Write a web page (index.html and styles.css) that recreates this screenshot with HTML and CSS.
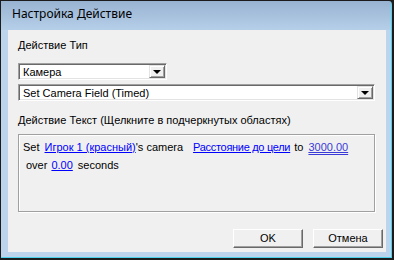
FILE: index.html
```html
<!DOCTYPE html>
<html lang="ru">
<head>
    <meta charset="UTF-8">
    <title>Настройка Действие</title>
    <link rel="stylesheet" href="styles.css">
</head>
<body>
    <div class="window">
        <div class="titlebar">Настройка Действие</div>
        <div class="client">
            <div class="label">Действие Тип</div>
            <div class="combo combo-short">
                <span class="combo-text">Камера</span>
                <span class="drop-btn"><i class="arrow"></i></span>
            </div>
            <div class="combo combo-long">
                <span class="combo-text">Set Camera Field (Timed)</span>
                <span class="drop-btn"><i class="arrow"></i></span>
            </div>
            <div class="label label-text">Действие Текст (Щелкните в подчеркнутых областях)</div>
            <div class="textbox">
                <div class="line">
                    <span>Set</span>
                    <a class="link link-player">Игрок 1 (красный)</a>
                    <span>'s camera</span>
                    <a class="link link-field">Расстояние до цели</a>
                    <span class="word-to">to</span>
                    <a class="link link-value">3000.00</a>
                </div>
                <div class="line line-indent">
                    <span>over</span>
                    <a class="link link-time">0.00</a>
                    <span class="word-seconds">seconds</span>
                </div>
            </div>
            <div class="buttons">
                <div class="button">OK</div>
                <div class="button">Отмена</div>
            </div>
        </div>
    </div>
</body>
</html>
```

FILE: styles.css
```css
body {
    margin: 0;
    font-family: 'Liberation Sans', Arial, sans-serif;
    font-size: 11px;
    color: #000;
    background: #1c1c1c;
}
.window {
    width: 394px;
    height: 260px;
    box-sizing: border-box;
    border: 1px solid #1c1c1c;
    border-right-width: 2px;
    border-bottom-width: 2px;
    border-top-right-radius: 5px;
    background: linear-gradient(#98b3d1 0, #b6cfe9 29px, #bcd4ec 29px);
    box-shadow: inset -1px -1px 0 #4cd2ea;
    display: flex;
    flex-direction: column;
}
.titlebar {
    height: 29px;
    box-sizing: border-box;
    padding: 5px 0 0 11px;
    font-family: 'Noto Sans', sans-serif;
    font-size: 12px;
    line-height: 16px;
}
.client {
    flex: 1;
    margin: 0 6px 6px 7px;
    background: #f0f0f0;
    padding: 8px 0 0 10px;
    display: flex;
    flex-direction: column;
    align-items: flex-start;
}
.label {
    line-height: 14px;
    height: 14px;
}
.combo {
    box-sizing: border-box;
    height: 17px;
    background: #fff;
    border-top: 1px solid #a0a0a0;
    border-left: 1px solid #a0a0a0;
    border-bottom: 1px solid #fff;
    border-right: 1px solid #fff;
    box-shadow: inset 1px 1px 0 #696969, inset -1px -1px 0 #e3e3e3;
    display: flex;
    align-items: stretch;
    padding: 2px 1px 1px 2px;
}
.combo-short {
    width: 149px;
    margin-top: 11px;
}
.combo-long {
    width: 357px;
    margin-top: 4px;
}
.combo-text {
    flex: 1;
    padding-left: 2px;
    line-height: 13px;
}
.drop-btn {
    width: 16px;
    box-sizing: border-box;
    background: #f0f0f0;
    border-top: 1px solid #e3e3e3;
    border-left: 1px solid #e3e3e3;
    border-right: 1px solid #696969;
    border-bottom: 1px solid #696969;
    box-shadow: inset 1px 1px 0 #fff, inset -1px -1px 0 #a0a0a0;
    display: flex;
    align-items: center;
    justify-content: center;
    margin-top: -1px;
}
.arrow {
    width: 0;
    height: 0;
    border-left: 4px solid transparent;
    border-right: 4px solid transparent;
    border-top: 4px solid #000;
    margin-top: 1px;
}
.label-text {
    margin-top: 12px;
}
.textbox {
    width: 357px;
    height: 78px;
    box-sizing: border-box;
    margin-top: 7px;
    border: 1px solid #a0a0a0;
    box-shadow: inset 1px 1px 0 #fff, 1px 1px 0 #fff;
    padding: 4px 0 0 4px;
}
.line {
    display: flex;
    line-height: 17px;
    height: 18px;
    white-space: pre;
}
.line-indent {
    padding-left: 3px;
}
.link {
    color: #0000ff;
    text-decoration: underline;
}
.link-player {
    margin-left: 5px;
}
.link-field {
    margin-left: 10px;
    letter-spacing: -0.3px;
}
.word-to {
    margin-left: 4px;
}
.link-value {
    margin-left: 5px;
    color: #3a3ad8;
    text-decoration: underline double;
}
.link-time {
    margin-left: 4px;
}
.word-seconds {
    margin-left: 5px;
}
.buttons {
    display: flex;
    gap: 10px;
    align-self: flex-end;
    margin-top: 17px;
    margin-right: 3px;
}
.button {
    width: 70px;
    height: 19px;
    box-sizing: border-box;
    border-top: 1px solid #fff;
    border-left: 1px solid #fff;
    border-right: 1px solid #696969;
    border-bottom: 1px solid #696969;
    box-shadow: inset -1px -1px 0 #a0a0a0;
    background: #f0f0f0;
    text-align: center;
    line-height: 17px;
}
```
